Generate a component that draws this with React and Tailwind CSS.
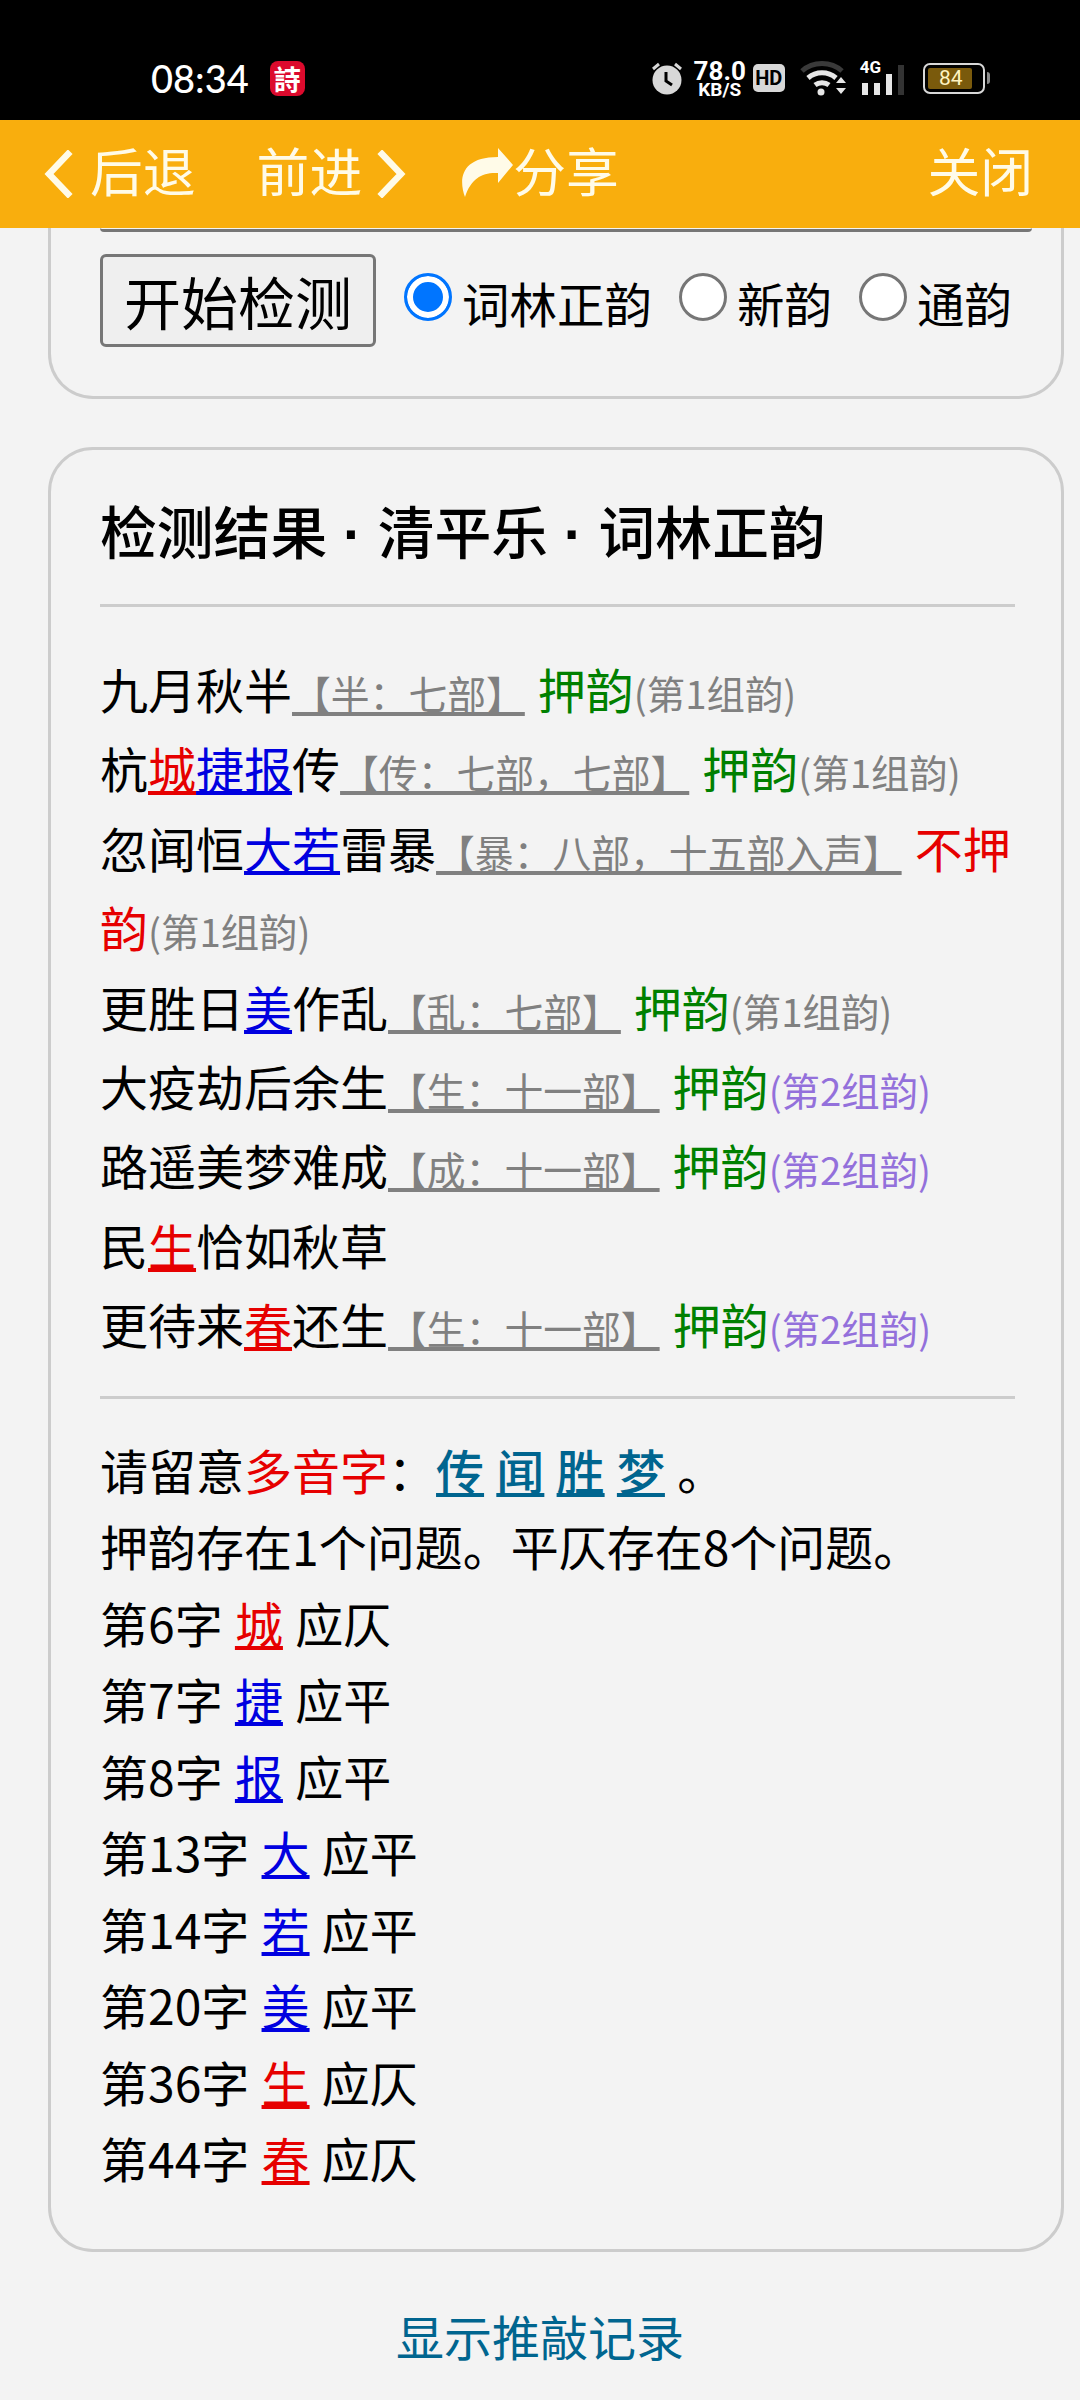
import React from 'react';

const cjk = { fontFamily: '"Noto Sans CJK SC", "Noto Sans", sans-serif' };

const Note = ({ children }) => (
  <span className="text-[38.8px] leading-none text-[#808080] underline decoration-[4px] underline-offset-[3px]">{children}</span>
);

const Mark = ({ c, children }) => (
  <span className={`underline decoration-[4px] underline-offset-[3px] ${c === 'r' ? 'text-[#e60000]' : 'text-[#0000e0]'}`}>{children}</span>
);

const Yes = () => <span className="text-[#008000] ml-[13px]">押韵</span>;
const No = () => <span className="text-[#e60000] ml-[13px]">不押韵</span>;
const Group = ({ n }) => (
  <span className={`text-[38.4px] leading-none ${n === 2 ? 'text-[#9370db]' : 'text-[#808080]'}`}>(第{n}组韵)</span>
);

const Line = ({ children }) => <div className="leading-[79.4px]">{children}</div>;

const checks = [
  ['第6字', '城', 'r', '应仄'],
  ['第7字', '捷', 'b', '应平'],
  ['第8字', '报', 'b', '应平'],
  ['第13字', '大', 'b', '应平'],
  ['第14字', '若', 'b', '应平'],
  ['第20字', '美', 'b', '应平'],
  ['第36字', '生', 'r', '应仄'],
  ['第44字', '春', 'r', '应仄'],
];

const Poly = ({ children }) => (
  <span className="text-[#00658f] font-medium underline decoration-[4px] underline-offset-[3px]">{children}</span>
);

const Chevron = ({ left }) => (
  <svg width="30" height="48" viewBox="0 0 30 48" fill="none" stroke="#fffbe8" strokeWidth="6.5" strokeLinecap="square" strokeLinejoin="miter">
    <polyline points={left ? '25,4 6,24 25,44' : '5,4 24,24 5,44'} />
  </svg>
);

const ShareIcon = () => (
  <svg width="54" height="49" viewBox="0 0 54 49" fill="#fffbe8" className="shrink-0">
    <path d="M39 0L54 17L39 35V25C24 24 12 30 6 49C-1 30 3 9 39 9Z" />
  </svg>
);

const Dot = () => <span className="font-bold" style={{ fontFamily: '"Liberation Sans", sans-serif' }}> · </span>;

const StatusBar = () => (
  <div className="h-[120px] bg-black flex items-center pt-[36px] text-white">
    <span className="ml-[151px] text-[38px] leading-none font-medium" style={{ fontFamily: 'Lato, sans-serif' }}>08:34</span>
    <span className="ml-[21px] w-[35px] h-[35px] rounded-[8px] bg-[#dc0a2d] flex items-center justify-center text-[27px] font-bold leading-none" style={{ fontFamily: '"Noto Sans CJK TC", serif' }}>詩</span>
    <svg className="ml-[345px]" width="34" height="34" viewBox="0 0 34 34">
      <circle cx="17" cy="19" r="14.5" fill="#d8d8d8" />
      <path d="M16 11v9l6 4" fill="none" stroke="#000" strokeWidth="3" />
      <path d="M3 8l6-5M31 8l-6-5" stroke="#d8d8d8" strokeWidth="3" />
    </svg>
    <div className="ml-[11px] w-[50px] flex flex-col items-center font-bold" style={{ fontFamily: 'Roboto, sans-serif' }}>
      <span className="text-[26px] leading-[22px]">78.0</span>
      <span className="text-[19px] leading-[15px]">KB/S</span>
    </div>
    <span className="ml-[8px] w-[32px] h-[28px] rounded-[5px] bg-[#d8d8d8] text-black text-[20px] font-bold flex items-center justify-center leading-none" style={{ fontFamily: 'Roboto, sans-serif' }}>HD</span>
    <svg className="ml-[15px]" width="48" height="36" viewBox="0 0 48 36" fill="none">
      <path d="M2 11C13 1 31 1 42 11" stroke="#3a3a3a" strokeWidth="5" />
      <path d="M8 18c8-7 20-7 28 0" stroke="#e6e6e6" strokeWidth="5" />
      <path d="M15 25c4-3 10-3 14 0" stroke="#e6e6e6" strokeWidth="5" />
      <circle cx="21" cy="32" r="3.5" fill="#e6e6e6" />
      <path d="M36 23l5-6 5 6zM36 28l5 6 5-6z" fill="#e6e6e6" />
    </svg>
    <div className="ml-[12px] w-[54px] h-[34px] relative" style={{ fontFamily: 'Roboto, sans-serif' }}>
      <span className="absolute left-0 top-[-2px] text-[17px] font-bold leading-none">4G</span>
      <div className="absolute inset-x-[2px] bottom-0 flex items-end gap-[6px]">
        <span className="w-[6px] h-[12px] bg-[#e6e6e6]" />
        <span className="w-[6px] h-[12px] bg-[#e6e6e6]" />
        <span className="w-[6px] h-[21px] bg-[#e6e6e6]" />
        <span className="w-[6px] h-[30px] bg-[#333]" />
      </div>
    </div>
    <div className="ml-[9px] w-[62px] h-[31px] rounded-[7px] border-[2px] border-[#d8d8d8] p-[3px] relative">
      <div className="w-[44px] h-full bg-[#7a5a0c] rounded-[2px]" />
      <span className="absolute inset-0 flex items-center justify-center text-[21px] text-[#fff3c0] leading-none pr-[6px]" style={{ fontFamily: 'Roboto, sans-serif' }}>84</span>
    </div>
    <span className="ml-[2px] w-[3px] h-[12px] bg-[#8a8a8a] rounded-r" />
  </div>
);

const NavBar = () => (
  <div className="h-[108px] bg-[#f9ae0d] flex items-center text-[52.8px] text-[#fffbe8] leading-none pb-[10px]">
    <span className="ml-[43px] pt-[10px]"><Chevron left /></span>
    <span className="ml-[17px]">后退</span>
    <span className="ml-[61px]">前进</span>
    <span className="ml-[15px] pt-[10px]"><Chevron /></span>
    <span className="ml-[52px] pt-[6px]"><ShareIcon /></span>
    <span>分享</span>
    <span className="ml-auto mr-[47px]">关闭</span>
  </div>
);

const Radio = ({ label, checked, className }) => (
  <label className={`flex items-center shrink-0 whitespace-nowrap ${className}`}>
    <input
      type="radio"
      name="rhyme"
      defaultChecked={checked}
      className="shrink-0 w-[48px] h-[48px] m-0 mt-[-8px] appearance-none rounded-full border-[3px] border-[#767676] bg-white checked:border-[#0075ff] checked:bg-[#0075ff] checked:shadow-[inset_0_0_0_6px_#ffffff]"
    />
    <span className="ml-[10px] text-[47.5px] leading-none mt-[4px]">{label}</span>
  </label>
);

export default function App() {
  return (
    <div className="w-[1080px] h-[2400px] overflow-hidden bg-[#f3f3f3] text-black text-[48px]" style={cjk}>
      <StatusBar />
      <NavBar />

      <div className="ml-[48px] w-[1016px] h-[171px] border-x-[3px] border-b-[3px] border-[#cccccc] rounded-b-[45px] px-[49px]">
        <div className="w-[932px] h-[4px] border-b-[3px] border-[#767676] rounded-b-[4px]" />
        <div className="flex mt-[22px]">
          <button className="shrink-0 w-[276px] h-[93px] bg-[#efefef] border-[3px] border-[#767676] rounded-[6px] text-[57px] leading-none">开始检测</button>
          <Radio label="词林正韵" checked className="ml-[28px]" />
          <Radio label="新韵" className="ml-[27px]" />
          <Radio label="通韵" className="ml-[27px]" />
        </div>
      </div>

      <div className="ml-[48px] mt-[48px] w-[1016px] h-[1805px] border-[3px] border-[#cccccc] rounded-[45px] px-[49px]">
        <h2 className="mt-[37px] text-[56.8px] font-medium leading-[84px]">检测结果<Dot />清平乐<Dot />词林正韵</h2>
        <div className="w-[915px] h-[3px] bg-[#cccccc] mt-[27px]" />

        <div className="w-[915px] mt-[42px]">
          <Line>九月秋半<Note>【半：七部】</Note><Yes /><Group n={1} /></Line>
          <Line>杭<Mark c="r">城</Mark><Mark c="b">捷报</Mark>传<Note>【传：七部，七部】</Note><Yes /><Group n={1} /></Line>
          <Line>忽闻恒<Mark c="b">大若</Mark>雷暴<Note>【暴：八部，十五部入声】</Note><No /><Group n={1} /></Line>
          <Line>更胜日<Mark c="b">美</Mark>作乱<Note>【乱：七部】</Note><Yes /><Group n={1} /></Line>
          <Line>大疫劫后余生<Note>【生：十一部】</Note><Yes /><Group n={2} /></Line>
          <Line>路遥美梦难成<Note>【成：十一部】</Note><Yes /><Group n={2} /></Line>
          <Line>民<Mark c="r">生</Mark>恰如秋草</Line>
          <Line>更待来<Mark c="r">春</Mark>还生<Note>【生：十一部】</Note><Yes /><Group n={2} /></Line>
        </div>

        <div className="w-[915px] h-[3px] bg-[#cccccc] mt-[32px]" />

        <div className="mt-[32px] leading-[76.5px] [word-spacing:1.5px]">
          <div>请留意<span className="text-[#e60000]">多音字</span>：<Poly>传</Poly> <Poly>闻</Poly> <Poly>胜</Poly> <Poly>梦</Poly> 。</div>
          <div>押韵存在1个问题。平仄存在8个问题。</div>
          {checks.map(([pos, ch, c, need]) => (
            <div key={pos}>{pos} <Mark c={c}>{ch}</Mark> {need}</div>
          ))}
        </div>
      </div>

      <div className="mt-[53px] text-center text-[#00658f] leading-[60px]">显示推敲记录</div>
    </div>
  );
}
